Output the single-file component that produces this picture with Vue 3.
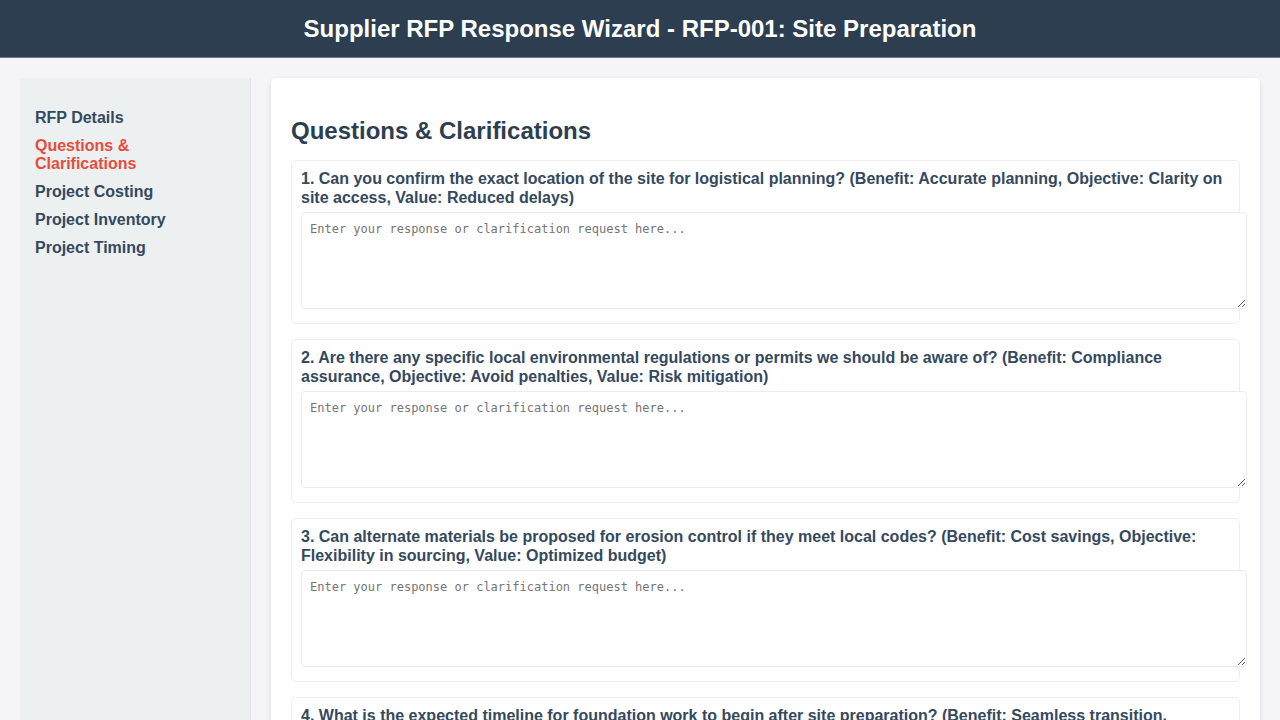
<script setup>
import { ref } from 'vue'

const steps = [
  'RFP Details',
  'Questions & Clarifications',
  'Project Costing',
  'Project Inventory',
  'Project Timing',
]
const current = ref(1)

const questions = [
  'Can you confirm the exact location of the site for logistical planning? (Benefit: Accurate planning, Objective: Clarity on site access, Value: Reduced delays)',
  'Are there any specific local environmental regulations or permits we should be aware of? (Benefit: Compliance assurance, Objective: Avoid penalties, Value: Risk mitigation)',
  'Can alternate materials be proposed for erosion control if they meet local codes? (Benefit: Cost savings, Objective: Flexibility in sourcing, Value: Optimized budget)',
  'What is the expected timeline for foundation work to begin after site preparation? (Benefit: Seamless transition, Objective: Schedule alignment, Value: Time efficiency)',
]
const answers = ref(questions.map(() => ''))
</script>

<template>
  <header class="header">
    <h1>Supplier RFP Response Wizard - RFP-001: Site Preparation</h1>
  </header>
  <div class="container">
    <nav class="sidebar">
      <ul>
        <li v-for="(step, i) in steps" :key="step">
          <a href="#" :class="{ active: i === current }" @click.prevent="current = i">{{ step }}</a>
        </li>
      </ul>
    </nav>
    <main class="content">
      <h2>Questions &amp; Clarifications</h2>
      <div v-for="(question, i) in questions" :key="i" class="question">
        <label :for="`q${i}`">{{ i + 1 }}. {{ question }}</label>
        <textarea
          :id="`q${i}`"
          v-model="answers[i]"
          placeholder="Enter your response or clarification request here..."
        ></textarea>
      </div>
    </main>
  </div>
</template>

<style>
body {
  margin: 0;
  background: #f4f4f9;
}
body::-webkit-scrollbar {
  display: none;
}
</style>

<style scoped>
.header,
.container {
  font-family: "Liberation Sans", Arial, sans-serif;
  color: #2c3e50;
}
.header {
  background: #2c3e50;
  color: #fff;
  padding: 15px 15px 14px;
  border-bottom: 1px solid #707b89;
  text-align: center;
}
.header h1 {
  margin: 0;
  font-size: 24px;
}
.container {
  display: flex;
  gap: 20px;
  padding: 20px;
}
.sidebar {
  box-sizing: border-box;
  width: 231px;
  flex-shrink: 0;
  padding: 15px;
  background: #ecf0f1;
  border-right: 1px solid #e2e4e7;
}
.sidebar ul {
  list-style: none;
  margin: 16px 0;
  padding: 0;
}
.sidebar li {
  margin-bottom: 10px;
}
.sidebar a {
  color: #34495e;
  font-weight: bold;
  text-decoration: none;
}
.sidebar a.active {
  color: #e74c3c;
}
.content {
  flex: 1;
  min-width: 0;
  padding: 20px;
  background: #fff;
  border-radius: 5px;
  box-shadow: 0 2px 5px rgba(0, 0, 0, 0.1);
}
.content h2 {
  margin: 19px 0 15px;
  font-size: 24px;
}
.question {
  margin-bottom: 15px;
  padding: 8px 10px 14px 9px;
  border: 1px solid #eee;
  border-radius: 5px;
}
.question label {
  display: block;
  color: #34495e;
  font-weight: bold;
  line-height: 19px;
}
.question textarea {
  display: block;
  width: 100%;
  height: 79px;
  margin-top: 5px;
  padding: 8px;
  border: 1px solid #ececec;
  border-radius: 4px;
  font-family: "DejaVu Sans Mono", monospace;
  font-size: 12px;
  line-height: 16px;
  resize: vertical;
}
</style>
